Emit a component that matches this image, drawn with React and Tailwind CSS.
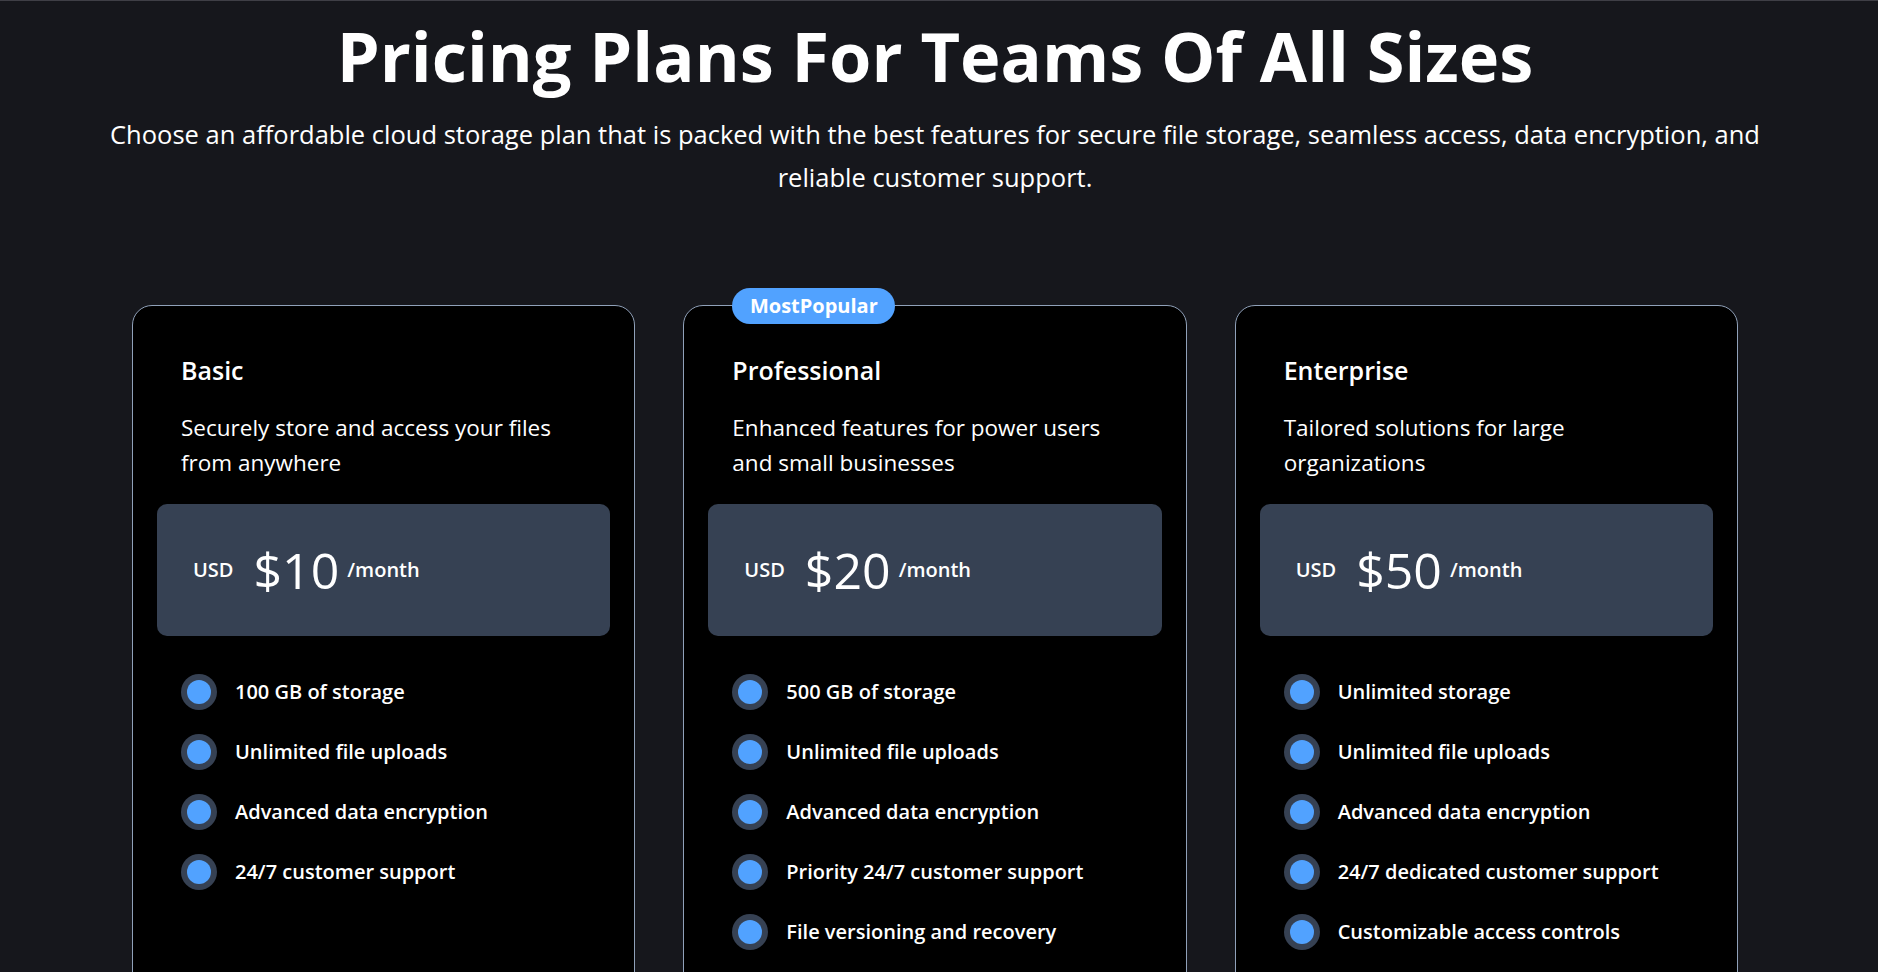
import React from 'react';

const plans = [
  {
    name: 'Basic',
    description: 'Securely store and access your files from anywhere',
    price: '$10',
    features: [
      '100 GB of storage',
      'Unlimited file uploads',
      'Advanced data encryption',
      '24/7 customer support',
    ],
  },
  {
    name: 'Professional',
    description: 'Enhanced features for power users and small businesses',
    price: '$20',
    popular: true,
    features: [
      '500 GB of storage',
      'Unlimited file uploads',
      'Advanced data encryption',
      'Priority 24/7 customer support',
      'File versioning and recovery',
    ],
  },
  {
    name: 'Enterprise',
    description: 'Tailored solutions for large organizations',
    price: '$50',
    features: [
      'Unlimited storage',
      'Unlimited file uploads',
      'Advanced data encryption',
      '24/7 dedicated customer support',
      'Customizable access controls',
    ],
  },
];

const PlanCard = ({ plan }) => (
  <div className="relative rounded-[20px] border border-slate-400 bg-black p-6 pb-16">
    {plan.popular && (
      <span className="absolute left-12 top-0 flex h-9 w-[163px] -translate-y-1/2 items-center justify-center rounded-full bg-blue-400 text-[20px] font-bold text-white">
        MostPopular
      </span>
    )}
    <div className="px-6 pt-6 pb-6">
      <h3 className="text-[25px] font-semibold leading-8">{plan.name}</h3>
      <p className="mt-6 text-[22.5px] leading-[35px]">{plan.description}</p>
    </div>
    <div className="flex h-[132px] items-center rounded-[10px] bg-gray-700 px-9">
      <span className="text-[20px] font-semibold">USD</span>
      <span className="ml-5 text-[50px] font-medium leading-none">{plan.price}</span>
      <span className="ml-2 text-[20px] font-semibold">/month</span>
    </div>
    <ul className="mt-[38px] space-y-6 px-6">
      {plan.features.map((f) => (
        <li key={f} className="flex items-center gap-[18px]">
          <span className="flex h-9 w-9 shrink-0 items-center justify-center rounded-full bg-gray-700">
            <span className="h-6 w-6 rounded-full bg-blue-400" />
          </span>
          <span className="text-[20px] font-semibold">{f}</span>
        </li>
      ))}
    </ul>
  </div>
);

export default function App() {
  return (
    <div className="min-h-screen border-t border-[#3f3f46] bg-[#16171c] pr-2 font-['Open_Sans',sans-serif] text-white">
      <header className="pt-[21px] text-center">
        <h1 className="text-[68.5px] font-bold leading-none">Pricing Plans For Teams Of All Sizes</h1>
        <p className="mx-auto mt-[22px] max-w-[1690px] text-[25.5px] leading-[43px]">
          Choose an affordable cloud storage plan that is packed with the best features for secure file storage, seamless access, data encryption, and reliable customer support.
        </p>
      </header>
      <div className="mx-auto mt-[106px] grid w-[1606px] grid-cols-3 gap-12">
        {plans.map((p) => (
          <PlanCard key={p.name} plan={p} />
        ))}
      </div>
    </div>
  );
}
